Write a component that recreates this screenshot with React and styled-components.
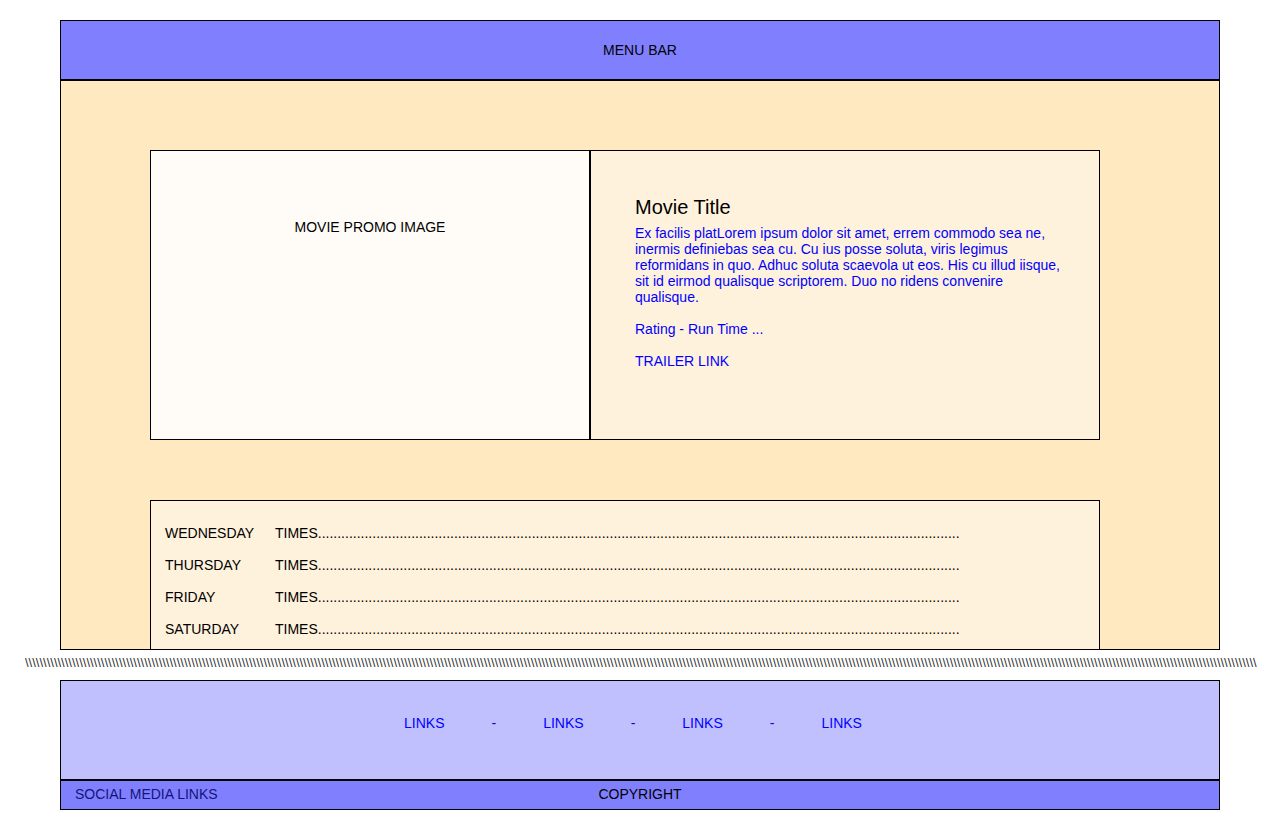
import React from "react";
import styled, { createGlobalStyle } from "styled-components";

const GlobalStyle = createGlobalStyle`
  body {
    margin: 0;
    background: #ffffff;
    font-family: "Liberation Sans", Arial, sans-serif;
    font-size: 14px;
    color: #000000;
  }
`;

const Page = styled.div`
  width: 1160px;
  margin-left: 60px;
  padding-top: 20px;
`;

const MenuBar = styled.header`
  box-sizing: border-box;
  height: 61px;
  background: #8080ff;
  border: 1px solid #000;
  border-bottom-width: 2px;
  display: flex;
  align-items: center;
  justify-content: center;
  padding-bottom: 1px;
`;

const Main = styled.main`
  box-sizing: border-box;
  height: 569px;
  background: #ffe9c1;
  border: 1px solid #000;
  border-top: none;
  padding: 69px 0 0 89px;
  display: flex;
  flex-direction: column;
`;

const Feature = styled.section`
  display: flex;
  height: 290px;
`;

const PromoImage = styled.div`
  box-sizing: border-box;
  width: 440px;
  background: #fffcf7;
  border: 1px solid #000;
  text-align: center;
  padding-top: 68px;
  line-height: 16px;
`;

const Details = styled.div`
  box-sizing: border-box;
  width: 510px;
  background: #fff2dc;
  border: 1px solid #000;
  padding: 45px 0 0 44px;
`;

const Title = styled.h1`
  margin: 0 0 6px;
  font-size: 20px;
  font-weight: normal;
  line-height: 23px;
`;

const Blurb = styled.p`
  margin: 0 0 16px;
  width: 432px;
  color: #0000ff;
  line-height: 16px;
`;

const Schedule = styled.section`
  box-sizing: border-box;
  width: 950px;
  margin-top: 60px;
  flex: 1;
  background: #fff2dc;
  border: 1px solid #000;
  border-bottom: none;
  padding: 16px 0 0 14px;
  overflow: hidden;
`;

const Row = styled.div`
  display: flex;
  height: 32px;
  line-height: 32px;
`;

const Day = styled.span`
  width: 110px;
`;

const Times = styled.span`
  white-space: nowrap;
`;

const Cut = styled.div`
  margin: 7px 0 0 -35px;
  height: 12px;
  line-height: 12px;
  font-size: 13px;
  color: #333;
  white-space: nowrap;
`;

const Footer = styled.footer`
  margin-top: 11px;
  border: 1px solid #000;
`;

const Links = styled.nav`
  box-sizing: border-box;
  height: 98px;
  background: #c0c0ff;
  display: flex;
  justify-content: center;
  gap: 47px;
  padding: 34px 14px 0 0;
  line-height: 16px;
  color: #0000ff;
`;

const BottomBar = styled.div`
  box-sizing: border-box;
  height: 30px;
  background: #8080ff;
  border-top: 2px solid #000;
  display: grid;
  grid-template-columns: 1fr auto 1fr;
  align-items: center;
  padding: 0 14px 3px;
`;

const Social = styled.span`
  color: #14147a;
`;

const days = ["WEDNESDAY", "THURSDAY", "FRIDAY", "SATURDAY"];
const links = ["LINKS", "-", "LINKS", "-", "LINKS", "-", "LINKS"];

export default function App() {
  return (
    <>
      <GlobalStyle />
      <Page>
        <MenuBar>MENU BAR</MenuBar>
        <Main>
          <Feature>
            <PromoImage>MOVIE PROMO IMAGE</PromoImage>
            <Details>
              <Title>Movie Title</Title>
              <Blurb>
                Ex facilis platLorem ipsum dolor sit amet, errem commodo sea ne,
                inermis definiebas sea cu. Cu ius posse soluta, viris legimus
                reformidans in quo. Adhuc soluta scaevola ut eos. His cu illud
                iisque, sit id eirmod qualisque scriptorem. Duo no ridens
                convenire qualisque.
              </Blurb>
              <Blurb>Rating - Run Time ...</Blurb>
              <Blurb>TRAILER LINK</Blurb>
            </Details>
          </Feature>
          <Schedule>
            {days.map((d) => (
              <Row key={d}>
                <Day>{d}</Day>
                <Times>TIMES{".".repeat(165)}</Times>
              </Row>
            ))}
          </Schedule>
        </Main>
        <Cut>{"\\".repeat(341)}</Cut>
        <Footer>
          <Links>
            {links.map((l, i) => (
              <span key={i}>{l}</span>
            ))}
          </Links>
          <BottomBar>
            <Social>SOCIAL MEDIA LINKS</Social>
            <span>COPYRIGHT</span>
            <span />
          </BottomBar>
        </Footer>
      </Page>
    </>
  );
}
